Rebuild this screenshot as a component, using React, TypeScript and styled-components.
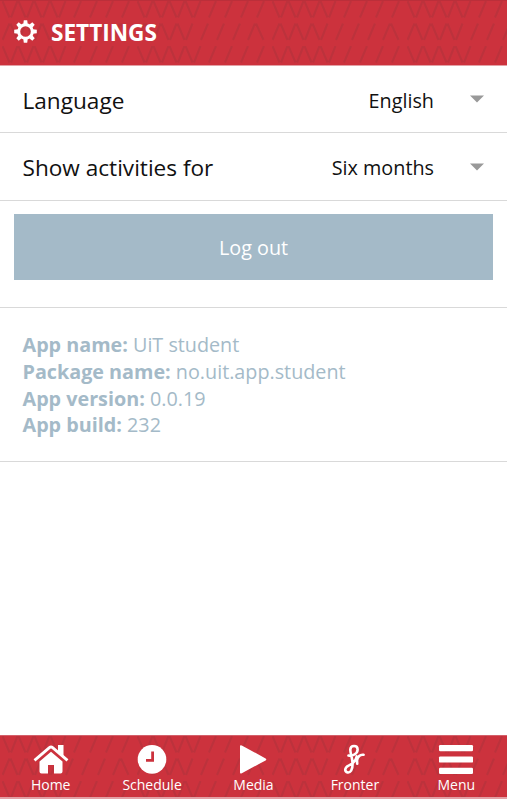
import React from "react";
import styled, { createGlobalStyle } from "styled-components";

const GlobalStyle = createGlobalStyle`
  * { box-sizing: border-box; }
  body { margin: 0; background: #fff; }
`;

const Screen = styled.div`
  width: 100%;
  height: 800px;
  display: flex;
  flex-direction: column;
  overflow: hidden;
  background: #fff;
  color: #111;
  font-family: "Open Sans", "Noto Sans", sans-serif;
`;

const Header = styled.header`
  position: relative;
  flex: none;
  height: 66px;
  display: flex;
  align-items: center;
  gap: 14px;
  padding: 0 14px 1px;
  background: #cc323d;
  border-top: 1px solid #bb2f3a;
  border-bottom: 1px solid #e3a0a5;
  color: #fff;
`;

const Backdrop = styled.svg`
  position: absolute;
  inset: 0;
  width: 100%;
  height: 100%;
`;

const GearIcon = styled.svg`
  position: relative;
  width: 23px;
  height: 23px;
  margin-bottom: 3px;
`;

const Title = styled.h1`
  position: relative;
  margin: 0;
  font-size: 22.6px;
  line-height: 30px;
  font-weight: 700;
`;

const Row = styled.div<{ $height: number }>`
  flex: none;
  height: ${(p) => p.$height}px;
  display: flex;
  align-items: center;
  padding: 2px 23px 0 22.5px;
  border-bottom: 1px solid #d9d9d9;
`;

const Label = styled.span`
  flex: 1;
  font-size: 22.6px;
`;

const Value = styled.span`
  font-size: 19.8px;
  margin-right: 36px;
`;

const Caret = styled.svg`
  width: 14px;
  height: 8px;
  margin-top: -2px;
`;

const Actions = styled.section`
  flex: none;
  height: 107px;
  padding: 13px 14px 0;
  border-bottom: 1px solid #d9d9d9;
`;

const LogoutButton = styled.button`
  display: block;
  width: 100%;
  height: 66px;
  padding: 0;
  border: 0;
  background: #a4bac8;
  color: #fff;
  font: 400 19.8px "Open Sans", sans-serif;
`;

const AppInfo = styled.section`
  flex: none;
  height: 154px;
  padding: 24px 22.5px 0;
  border-bottom: 1px solid #d9d9d9;
  color: #a4bac8;
  font-size: 19.75px;
  line-height: 26.75px;
`;

const Spacer = styled.div`
  flex: 1;
`;

const Footer = styled.nav`
  position: relative;
  flex: none;
  height: 64px;
  margin-bottom: 1px;
  display: grid;
  grid-template-columns: repeat(5, 1fr);
  background: #cc323d;
  border-top: 1px solid #d4606a;
  border-bottom: 2px solid #e3a0a5;
`;

const Tab = styled.a`
  position: relative;
  display: flex;
  flex-direction: column;
  align-items: center;
  padding-top: 7px;
  color: #fff;
  font-size: 14px;
  line-height: 19px;
`;

const TabIcon = styled.svg`
  width: 36px;
  height: 32px;
`;

const TabLabel = styled.span``;

function Pattern({ id }: { id: string }) {
  return (
    <Backdrop aria-hidden="true">
      <defs>
        <pattern id={id} x="2" y="0" width="135" height="45" patternUnits="userSpaceOnUse">
          <path
            d="M0.5 0 L7.5 16.5 M9 16.5 L15.5 0 M16.5 0 L23.5 16.5 M25 16.5 L31.5 0 M32.5 0 L39.5 16.5 M41 16.5 L47.5 0 M48.5 0 L55.5 16.5 M57 16.5 L63.5 0
               M72 16.5 L79 0 M88 16.5 L95 0 M104 16.5 L111 0 M120 16.5 L127 0
               M0.5 39 L7.5 22.5 M8.5 22.5 L15.5 39 M17 39 L23.5 22.5 M24.5 22.5 L31.5 39 M33 39 L39.5 22.5 M40.5 22.5 L47.5 39 M49 39 L55.5 22.5
               M64 39 L71 22.5 M80 39 L87 22.5 M96 39 L103 22.5 M111 39 L118 22.5 M119 22.5 L126.5 39"
            fill="none"
            stroke="#7d3338"
            strokeOpacity="0.2"
            strokeWidth="2.2"
          />
        </pattern>
      </defs>
      <rect width="100%" height="100%" fill={`url(#${id})`} />
    </Backdrop>
  );
}

const teeth = [0, 45, 90, 135, 180, 225, 270, 315];

function SettingRow({ label, value, height }: { label: string; value: string; height: number }) {
  return (
    <Row $height={height}>
      <Label>{label}</Label>
      <Value>{value}</Value>
      <Caret viewBox="0 0 14 8">
        <path d="M0 0.5H14L7 7.5Z" fill="#999" />
      </Caret>
    </Row>
  );
}

const tabs = [
  {
    label: "Home",
    icon: (
      <>
        <path d="M18 8.7 L29.5 18.4 V28.5 Q29.5 30.5 27.5 30.5 H21 V22 H15 V30.5 H8.5 Q6.5 30.5 6.5 28.5 V18.4 Z" />
        <path d="M1.5 17.4 L16.4 4.6 Q18 3.3 19.6 4.6 L34.5 17.4" fill="none" stroke="#fff" strokeWidth="2.8" />
        <path d="M25 2 H30.5 V14 L25 9.5 Z" />
      </>
    ),
  },
  {
    label: "Schedule",
    icon: (
      <>
        <circle cx="18" cy="16.4" r="14.3" />
        <path d="M18.6 8.4 V17.3 H12" fill="none" stroke="#cc323d" strokeWidth="2.8" />
      </>
    ),
  },
  {
    label: "Media",
    icon: <path d="M5 3.3 Q5 1.5 6.8 2.5 L30.6 15.4 Q32 16.4 30.6 17.4 L6.8 30.2 Q5 31.2 5 29.4 Z" />,
  },
  {
    label: "Fronter",
    icon: (
      <path
        d="M11.5 12.6 C16 13.6 20.8 10.2 20.6 6.2 C20.4 2 13.6 1.8 13.3 6.6 C13.2 10.5 15.6 15 15.6 21 C15.6 27 13.4 29.8 10.6 29.4 C7 28.6 7.8 24.2 11.6 22.6 C15.6 21 18.6 18 19.8 13.4 L20.2 20.6 M20 17.5 C20.6 13.6 23 11.2 26.6 11.8"
        fill="none"
        stroke="#fff"
        strokeWidth="2.6"
        strokeLinecap="round"
        strokeLinejoin="round"
      />
    ),
  },
  {
    label: "Menu",
    icon: (
      <>
        <rect x="1" y="2" width="34" height="6.2" rx="1.2" />
        <rect x="1" y="13.4" width="34" height="6.2" rx="1.2" />
        <rect x="1" y="24.7" width="34" height="6.2" rx="1.2" />
      </>
    ),
  },
];

export default function App() {
  return (
    <Screen>
      <GlobalStyle />
      <Header>
        <Pattern id="headerZigzag" />
        <GearIcon viewBox="-11.5 -11.5 23 23">
          <circle r="6.8" fill="none" stroke="#fff" strokeWidth="3" />
          {teeth.map((angle) => (
            <path key={angle} d="M-2.2 -7.5 L-1.7 -11.3 H1.7 L2.2 -7.5 Z" fill="#fff" transform={`rotate(${angle})`} />
          ))}
        </GearIcon>
        <Title>SETTINGS</Title>
      </Header>
      <SettingRow label="Language" value="English" height={67} />
      <SettingRow label="Show activities for" value="Six months" height={68} />
      <Actions>
        <LogoutButton>Log out</LogoutButton>
      </Actions>
      <AppInfo>
        <div><b>App name:</b> UiT student</div>
        <div><b>Package name:</b> no.uit.app.student</div>
        <div><b>App version:</b> 0.0.19</div>
        <div><b>App build:</b> 232</div>
      </AppInfo>
      <Spacer />
      <Footer>
        <Pattern id="footerZigzag" />
        {tabs.map((tab) => (
          <Tab key={tab.label}>
            <TabIcon viewBox="0 0 36 32" fill="#fff">{tab.icon}</TabIcon>
            <TabLabel>{tab.label}</TabLabel>
          </Tab>
        ))}
      </Footer>
    </Screen>
  );
}
